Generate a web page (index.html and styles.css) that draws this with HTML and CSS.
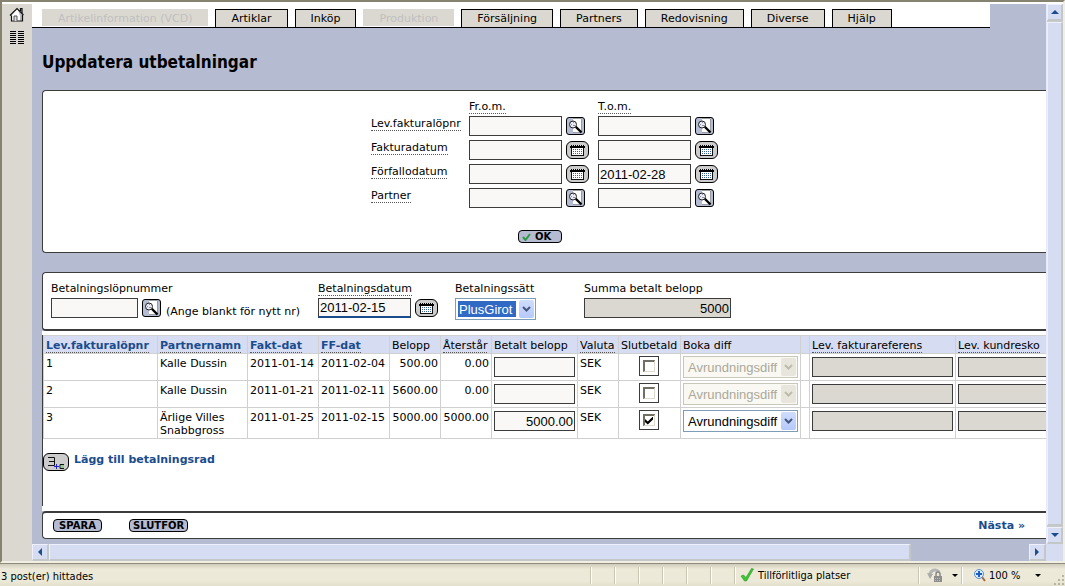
FILE: index.html
```html
<!DOCTYPE html>
<html lang="sv">
<head>
<meta charset="utf-8">
<title>Uppdatera utbetalningar</title>
<link rel="stylesheet" href="styles.css">
</head>
<body>
<svg class="sprites" aria-hidden="true">
  <symbol id="search" viewBox="1 1 17 16">
    <path d="M7 1.500h8.500v14H7" fill="#fff" stroke="#9a9ba3"/>
    <path d="M9.500 9.500l6 6" stroke="#000" stroke-width="2.400"/>
    <circle cx="7" cy="7.500" r="3.500" fill="#e8eaf2" stroke="#222" stroke-width="1"/>
    <path d="M5 7.500h1M7 5.500h1M7 8.500h2" stroke="#8d93a8"/>
  </symbol>
  <symbol id="calendar" viewBox="1 1 21 16">
    <rect x="5.500" y="5.500" width="12" height="9" fill="#fff" stroke="#111"/>
    <rect x="4" y="4" width="15" height="3" fill="#000"/>
    <path d="M4 4.500h15" stroke="#ddd" stroke-dasharray="1 1"/>
    <path d="M7 8.500h10M7 10.500h10M7 12.500h10" stroke="#3c62a8" stroke-dasharray="1 1"/>
  </symbol>
</svg>

<div class="frame">
  <nav class="rail">
    <a href="#home" aria-label="Hem">
      <svg width="16" height="16" viewBox="0 0 16 16">
        <path d="M3 8v6h10V7L8 2z" fill="#fff"/>
        <path d="M9 3l5 5v6h-3V9z" fill="#b9b9b9"/>
        <path d="M1 8.500L8 1.500l6.500 6.500M11.500 4V1.500h1.500V6M2.500 8.500v5.500h11V8" fill="none" stroke="#111" stroke-width="1.200"/>
        <path d="M5 14V9h3v5" fill="#ddd" stroke="#555"/>
      </svg>
    </a>
    <a href="#list" aria-label="Lista">
      <svg width="16" height="14" viewBox="0 0 16 14">
        <path d="M1 .5h6M9 .5h6M1 2.500h6M9 2.500h6M1 4.500h6M9 4.500h6M1 6.500h6M9 6.500h6M1 8.500h6M9 8.500h6M1 10.500h6M9 10.500h6M1 12.500h6M9 12.500h6" stroke="#000" stroke-width="1"/>
      </svg>
    </a>
  </nav>

  <div class="pane">
    <main class="page">
      <nav class="tabs">
        <button class="tab" disabled>Artikelinformation (VCD)</button>
        <button class="tab">Artiklar</button>
        <button class="tab">Inköp</button>
        <button class="tab" disabled>Produktion</button>
        <button class="tab">Försäljning</button>
        <button class="tab">Partners</button>
        <button class="tab">Redovisning</button>
        <button class="tab">Diverse</button>
        <button class="tab">Hjälp</button>
      </nav>

      <h1>Uppdatera utbetalningar</h1>

      <form class="panel filter">
        <div class="filter-grid">
          <span></span>
          <span><span class="hint">Fr.o.m.</span></span>
          <span><span class="hint">T.o.m.</span></span>

          <label for="lev-from"><span class="hint">Lev.fakturalöpnr</span></label>
          <div class="field"><input id="lev-from" type="text"><button type="button" class="icon" aria-label="Sök"><svg><use href="#search"/></svg></button></div>
          <div class="field"><input type="text" aria-label="Lev.fakturalöpnr t.o.m."><button type="button" class="icon" aria-label="Sök"><svg><use href="#search"/></svg></button></div>

          <label for="fd-from"><span class="hint">Fakturadatum</span></label>
          <div class="field"><input id="fd-from" type="text"><button type="button" class="icon date" aria-label="Kalender"><svg><use href="#calendar"/></svg></button></div>
          <div class="field"><input type="text" aria-label="Fakturadatum t.o.m."><button type="button" class="icon date" aria-label="Kalender"><svg><use href="#calendar"/></svg></button></div>

          <label for="ff-from"><span class="hint">Förfallodatum</span></label>
          <div class="field"><input id="ff-from" type="text"><button type="button" class="icon date" aria-label="Kalender"><svg><use href="#calendar"/></svg></button></div>
          <div class="field"><input type="text" value="2011-02-28" aria-label="Förfallodatum t.o.m."><button type="button" class="icon date" aria-label="Kalender"><svg><use href="#calendar"/></svg></button></div>

          <label for="p-from"><span class="hint">Partner</span></label>
          <div class="field"><input id="p-from" type="text"><button type="button" class="icon" aria-label="Sök"><svg><use href="#search"/></svg></button></div>
          <div class="field"><input type="text" aria-label="Partner t.o.m."><button type="button" class="icon" aria-label="Sök"><svg><use href="#search"/></svg></button></div>
        </div>
        <button type="button" class="pill ok"><svg width="9" height="8" viewBox="0 0 9 8"><path d="M1 4l2.500 3L8 1" fill="none" stroke="#2f9a45" stroke-width="2"/></svg>OK</button>
      </form>

      <section class="panel payment">
        <div class="group run">
          <label for="run">Betalningslöpnummer</label>
          <div class="field"><input id="run" type="text"><button type="button" class="icon" aria-label="Sök"><svg><use href="#search"/></svg></button><span class="note">(Ange blankt för nytt nr)</span></div>
        </div>
        <div class="group paydate">
          <label for="paydate"><span class="hint">Betalningsdatum</span></label>
          <div class="field"><input id="paydate" class="active" type="text" value="2011-02-15"><button type="button" class="icon date" aria-label="Kalender"><svg><use href="#calendar"/></svg></button></div>
        </div>
        <div class="group method">
          <label for="method">Betalningssätt</label>
          <div class="dropdown chosen"><select id="method"><option>PlusGirot</option></select><span class="arrow"><svg viewBox="0 0 9 6"><path d="M1 1l3.500 3.500L8 1"/></svg></span></div>
        </div>
        <div class="group total">
          <label for="total">Summa betalt belopp</label>
          <input id="total" type="text" value="5000" readonly>
        </div>
      </section>

      <section class="rows">
        <div class="rows-body">
          <table>
            <colgroup>
              <col class="c-no"><col class="c-name"><col class="c-date"><col class="c-date"><col class="c-sum"><col class="c-sum"><col class="c-paid"><col class="c-cur"><col class="c-done"><col class="c-diff"><col class="c-gap"><col class="c-ref"><col class="c-ref">
            </colgroup>
            <thead>
              <tr>
                <th><a class="hint" href="#no">Lev.fakturalöpnr</a></th>
                <th><a class="hint" href="#name">Partnernamn</a></th>
                <th><a class="hint" href="#fakt">Fakt-dat</a></th>
                <th><a class="hint" href="#ff">FF-dat</a></th>
                <th>Belopp</th>
                <th><span class="hint">Återstår</span></th>
                <th>Betalt belopp</th>
                <th><span class="hint">Valuta</span></th>
                <th>Slutbetald</th>
                <th>Boka diff</th>
                <th></th>
                <th><span class="hint">Lev. fakturareferens</span></th>
                <th><span class="hint">Lev. kundresko</span></th>
              </tr>
            </thead>
            <tbody>
              <tr>
                <td>1</td><td>Kalle Dussin</td><td>2011-01-14</td><td>2011-02-04</td><td class="num">500.00</td><td class="num">0.00</td>
                <td class="ctl"><input type="text" class="num" aria-label="Betalt belopp 1"></td><td>SEK</td>
                <td class="tick"><label><input type="checkbox" aria-label="Slutbetald 1"></label></td>
                <td class="sel"><div class="dropdown"><select aria-label="Boka diff 1" disabled><option>Avrundningsdiff</option></select><span class="arrow"><svg viewBox="0 0 9 6"><path d="M1 1l3.500 3.500L8 1"/></svg></span></div></td><td></td>
                <td class="ctl"><input type="text" readonly aria-label="Lev. fakturareferens 1"></td><td class="ctl"><input type="text" readonly aria-label="Lev. kundreskontra 1"></td>
              </tr>
              <tr>
                <td>2</td><td>Kalle Dussin</td><td>2011-01-21</td><td>2011-02-11</td><td class="num">5600.00</td><td class="num">0.00</td>
                <td class="ctl"><input type="text" class="num" aria-label="Betalt belopp 2"></td><td>SEK</td>
                <td class="tick"><label><input type="checkbox" aria-label="Slutbetald 2"></label></td>
                <td class="sel"><div class="dropdown"><select aria-label="Boka diff 2" disabled><option>Avrundningsdiff</option></select><span class="arrow"><svg viewBox="0 0 9 6"><path d="M1 1l3.500 3.500L8 1"/></svg></span></div></td><td></td>
                <td class="ctl"><input type="text" readonly aria-label="Lev. fakturareferens 2"></td><td class="ctl"><input type="text" readonly aria-label="Lev. kundreskontra 2"></td>
              </tr>
              <tr>
                <td>3</td><td>Ärlige Villes Snabbgross</td><td>2011-01-25</td><td>2011-02-15</td><td class="num">5000.00</td><td class="num">5000.00</td>
                <td class="ctl"><input type="text" class="num" value="5000.00" aria-label="Betalt belopp 3"></td><td>SEK</td>
                <td class="tick"><label><input type="checkbox" checked aria-label="Slutbetald 3"></label></td>
                <td class="sel"><div class="dropdown"><select aria-label="Boka diff 3"><option>Avrundningsdiff</option></select><span class="arrow"><svg viewBox="0 0 9 6"><path d="M1 1l3.500 3.500L8 1"/></svg></span></div></td><td></td>
                <td class="ctl"><input type="text" readonly aria-label="Lev. fakturareferens 3"></td><td class="ctl"><input type="text" readonly aria-label="Lev. kundreskontra 3"></td>
              </tr>
            </tbody>
          </table>
          <div class="add">
            <button type="button" class="icon date addrow" aria-label="Lägg till">
              <svg viewBox="0 0 24 16"><path d="M4 3.500h6.500v8H4M5 7.500h5" fill="none" stroke="#111"/><path d="M10 12.500h5M12.500 10v5" stroke="#2222cc"/><path d="M20 10.500h-4v4h4" fill="none" stroke="#111"/><rect x="17" y="11" width="3" height="3" fill="#7ed67e"/></svg>
            </button>
            <a href="#add">Lägg till betalningsrad</a>
          </div>
        </div>
      </section>

      <footer class="panel actions">
        <button type="button" class="pill">SPARA</button>
        <button type="button" class="pill">SLUTFÖR</button>
        <a href="#next">Nästa »</a>
      </footer>
    </main>

    <div class="vbar">
      <button class="step" aria-label="Upp"><svg viewBox="0 0 8 8"><path d="M0 6l4-4 4 4z"/></svg></button>
      <div class="thumb"></div>
      <button class="step" aria-label="Ned"><svg viewBox="0 0 8 8"><path d="M0 2l4 4 4-4z"/></svg></button>
    </div>
    <div class="hbar">
      <button class="step" aria-label="Vänster"><svg viewBox="0 0 8 8"><path d="M6 0L2 4l4 4z"/></svg></button>
      <div class="track"><div class="thumb"></div></div>
      <button class="step" aria-label="Höger"><svg viewBox="0 0 8 8"><path d="M2 0l4 4-4 4z"/></svg></button>
    </div>
    <div class="corner"></div>
  </div>
</div>

<div class="status">
  <span class="message">3 post(er) hittades</span>
  <span class="cell"></span><span class="cell"></span><span class="cell"></span><span class="cell"></span><span class="cell"></span><span class="cell"></span>
  <span class="cell zone"><svg width="14" height="14" viewBox="0 0 14 14"><path d="M1 8l2.500-1L6 9.500 11.500.5l2 .5L6.500 13H4.500z" fill="#3fc435" stroke="#2b9a28" stroke-width=".6"/></svg>Tillförlitliga platser</span>
  <span class="cell guard">
    <svg width="16" height="14" viewBox="0 0 16 14"><path d="M3 7a5 5 0 0 1 9-3" fill="none" stroke="#b5b5b5" stroke-width="3"/><path d="M0 5l6 1-3 5z" fill="#aaa"/><path d="M9 8V6a2 2 0 0 1 4 0v2" fill="none" stroke="#888" stroke-width="1.500"/><rect x="7" y="8" width="8" height="6" fill="#8c8c8c"/><path d="M8 10.500h6M8 12.500h6" stroke="#bbb" stroke-dasharray="1 1"/></svg>
    <i class="caret"></i>
  </span>
  <span class="cell zoom">
    <svg width="12" height="13" viewBox="0 0 12 13"><path d="M8 8l3 4" stroke="#a8693c" stroke-width="2"/><circle cx="5" cy="5" r="4.500" fill="#d8ecff" stroke="#5b8fd0"/><path d="M2 5h6M5 2v6" stroke="#1c5fc0" stroke-width="2"/></svg>
    <span>100 %</span><i class="caret"></i>
  </span>
  <svg class="grip" width="12" height="12" viewBox="0 0 12 12"><path d="M9 1h2v2H9zM9 5h2v2H9zM5 5h2v2H5zM9 9h2v2H9zM5 9h2v2H5zM1 9h2v2H1z" fill="#b8b4a0"/></svg>
</div>
</body>
</html>
```
FILE: styles.css
```css
* { box-sizing: border-box; }

body {
  margin: 0;
  height: 100vh;
  display: flex;
  flex-direction: column;
  overflow: hidden;
  background: #ece9d8;
  color: #000;
  font: 11px/13px "DejaVu Sans", Verdana, sans-serif;
}

button, input, select { font: inherit; color: inherit; margin: 0; }
button { padding: 0; }
a { color: #1a4c8e; font-weight: bold; text-decoration: none; }
.sprites { display: none; }

/* Frame */
.frame {
  flex: 1;
  min-height: 0;
  display: flex;
  padding-top: 2px;
  background: #fff;
  border: 2px solid #85826f;
  border-right-color: #f1efe2;
  border-bottom-color: #f1efe2;
}
.rail {
  flex: none;
  width: 30px;
  background: #dbd8d1;
  display: flex;
  flex-direction: column;
  align-items: center;
  gap: 8px;
  padding-top: 3px;
}
.rail a { display: flex; }
.pane {
  flex: 1;
  min-width: 0;
  display: grid;
  grid-template: minmax(0, 1fr) 17px / minmax(0, 1fr) 17px;
}

/* Page */
.page {
  display: flex;
  flex-direction: column;
  min-height: 0;
  overflow: hidden;
  padding-bottom: 5px;
  background: #b5bbd1;
}
.page > * { flex: none; }
.tabs {
  display: flex;
  align-items: flex-end;
  gap: 7px;
  height: 24px;
  margin-right: 56px;
  padding-left: 10px;
  background: #fff;
  border-bottom: 1px solid #000;
}
.tab {
  height: 18px;
  padding: 0 15px;
  white-space: nowrap;
  background: #dbd8d1;
  border: 1px solid #000;
  border-bottom: 0;
}
.tab:disabled {
  height: 17px;
  margin-bottom: 1px;
  border-color: #dbd8d1;
  color: #c0c0c0;
}
h1 {
  margin: 24px 0 18px 10px;
  font-family: "DejaVu Sans Condensed", Tahoma, sans-serif;
  font-size: 17px;
  line-height: 20px;
}
.panel {
  margin-left: 10px;
  background: #fff;
  border: 1px solid #3c3c3c;
  border-right: 0;
  border-radius: 4px 0 0 4px;
}
.hint { border-bottom: 1px dotted #555; }

/* Fields */
.field { display: flex; align-items: center; gap: 4px; }
input[type="text"] {
  height: 20px;
  padding: 0 1px;
  background: #f9f8f6;
  border: 1px solid #3c3c3c;
  border-radius: 0;
  outline: 0;
  font: 13px "Liberation Sans", Arial, sans-serif;
}
.field input { width: 93px; }
input[type="text"]:read-only { background: #dbd8d1; }
.icon {
  width: 19px;
  height: 18px;
  display: flex;
  background: #b5bbd1;
  border: 1px solid #000;
  border-radius: 3px;
}
.icon svg { width: 100%; height: 100%; }
.icon.date {
  width: 23px;
  background: #ccc;
  border-radius: 6px;
}
.icon.addrow { width: 26px; }
.pill {
  display: flex;
  align-items: center;
  justify-content: center;
  min-width: 49px;
  height: 13px;
  padding: 0 3px;
  background: #b5bbd1;
  border: 1px solid #000;
  border-radius: 4px;
  font-size: 10px;
  font-weight: bold;
  line-height: 11px;
}

/* Search filter */
.filter {
  display: flex;
  flex-direction: column;
  align-items: center;
  gap: 20px;
  padding: 9px 0;
}
.filter-grid {
  display: grid;
  grid-template-columns: 98px 129px 120px;
  grid-template-rows: 14px repeat(4, 24px);
}
.filter-grid > label { padding-top: 3px; }
.pill.ok {
  justify-content: flex-start;
  min-width: 44px;
  gap: 4px;
  margin-right: 9px;
}

/* Payment head */
.payment {
  display: flex;
  margin-top: 19px;
  padding: 9px 8px;
  border-bottom-width: 2px;
}
.group { display: flex; flex-direction: column; gap: 3px; }
.group .field { height: 20px; }
.run { width: 267px; }
.run .field input { width: 87px; }
.note { padding: 6px 0 0 1px; white-space: nowrap; }
.paydate { width: 137px; }
.field .active { border-bottom: 2px solid #1a4c8e; }
.method { width: 129px; }
.method .dropdown { width: 81px; }
.total input { width: 147px; text-align: right; }

/* Dropdown */
.dropdown { position: relative; }
.dropdown select {
  display: block;
  appearance: none;
  width: 100%;
  height: 22px;
  padding: 0 4px;
  background: #fff;
  border: 1px solid #7f9db9;
  border-radius: 0;
  opacity: 1;
  font: 13px "Liberation Sans", Arial, sans-serif;
}
.dropdown.chosen select {
  padding: 2px 19px 2px 2px;
  background: #316ac5 content-box;
  color: #fff;
  text-indent: 1px;
}
.arrow {
  position: absolute;
  top: 2px;
  right: 2px;
  bottom: 2px;
  width: 15px;
  display: flex;
  align-items: center;
  justify-content: center;
  background: linear-gradient(#cfdcfd, #b5c9fa);
  border-radius: 2px;
  pointer-events: none;
}
.arrow svg { width: 9px; fill: none; stroke: #45587d; stroke-width: 2; }
.dropdown select:disabled { background: #f9f8f3; border-color: #c9c7ba; color: #aca899; }
select:disabled + .arrow { background: #e8e6dc; }
select:disabled + .arrow svg { stroke: #bebbaa; }

/* Rows */
.page > .rows {
  flex: 1 0 auto;
  display: flex;
  margin-left: 10px;
  padding: 4px 0 5px;
  background: #fff;
}
.rows-body {
  flex: 1;
  min-width: 0;
  overflow: hidden;
  border-left: 1px solid #3c3c3c;
}
table { width: 1059px; table-layout: fixed; border-collapse: collapse; }
.c-no { width: 114px; }
.c-name { width: 90px; }
.c-date { width: 71px; }
.c-sum { width: 51px; }
.c-paid { width: 86px; }
.c-cur { width: 41px; }
.c-done { width: 62px; }
.c-diff { width: 120px; }
.c-gap { width: 9px; }
.c-ref { width: 146px; }
th, td {
  padding: 3px 0 0 2px;
  border: 1px solid #d0d0d0;
  text-align: left;
  vertical-align: top;
  font-weight: normal;
}
th { height: 18px; background: #d6dcf1; white-space: nowrap; }
td { height: 27px; }
tbody tr:last-child td { height: 31px; }
td.num { padding-right: 2px; text-align: right; }
input.num { text-align: right; }
td.ctl { padding: 3px 2px 0; }
.ctl input { display: block; width: 100%; }
td.sel { padding: 2px 2px 0; }
td.tick { padding: 2px 2px 0 0; }
.tick label {
  display: flex;
  align-items: center;
  justify-content: center;
  width: 20px;
  height: 20px;
  margin: 0 auto;
  border: 1px solid #3c3c3c;
}
.tick input {
  appearance: none;
  width: 12px;
  height: 12px;
  display: flex;
  align-items: center;
  justify-content: center;
  border: 2px solid #716f64;
  border-right: 1px solid #dedbcc;
  border-bottom: 1px solid #dedbcc;
  background: #fff;
}
.tick input:checked::before {
  content: "";
  width: 8px;
  height: 8px;
  background: #000;
  clip-path: polygon(0 30%, 35% 62%, 100% 0, 100% 38%, 35% 100%, 0 68%);
}
.add { display: flex; gap: 5px; margin-top: 14px; }

/* Actions */
.actions {
  display: flex;
  align-items: center;
  height: 28px;
  padding: 0 21px 0 10px;
  border-top-width: 2px;
}
.actions .pill { margin-right: 27px; }
.actions a { margin-left: auto; }

/* Scrollbars */
.vbar { display: flex; flex-direction: column; gap: 1px; background: #c8cac9; border-left: 1px solid #e6eafa; }
.vbar .thumb { flex: 1; }
.hbar { display: flex; background: #b5bbd1; }
.track { flex: 1; display: flex; }
.track .thumb { width: 88%; }
.thumb, .step {
  background: #d6dcf1;
  border: 1px solid #eef1fd;
  border-right: 2px solid #c4c7c7;
  border-bottom: 2px solid #c4c7c7;
}
.step { flex: none; width: 17px; height: 17px; display: flex; align-items: center; justify-content: center; }
.vbar .step { width: 16px; }
.step svg { width: 8px; height: 8px; fill: #1a4c8e; }
.corner { background: #d6dcf1; }

/* Status bar */
.status {
  flex: none;
  height: 23px;
  display: flex;
  align-items: center;
  border-top: 1px solid #8e8b7c;
  background: linear-gradient(#cfccbb, #ece9d8 5px, #ece9d8 17px, #e2dfcc);
  font: 11px "DejaVu Sans Condensed", Tahoma, sans-serif;
}
.message { flex: 1; padding: 3px 0 0 1px; }
.cell {
  width: 24px;
  height: 17px;
  display: flex;
  align-items: center;
  border-left: 1px solid #c9c6b4;
  box-shadow: inset 1px 0 #fff;
}
.zone { width: 184px; gap: 4px; padding-left: 5px; }
.guard { width: 43px; gap: 9px; padding-left: 8px; }
.zoom { width: 92px; gap: 3px; padding-left: 12px; }
.zoom .caret { margin-left: 12px; }
.caret { border: 3px solid transparent; border-top-color: #000; border-bottom: 0; }
.grip { align-self: flex-end; }
```
